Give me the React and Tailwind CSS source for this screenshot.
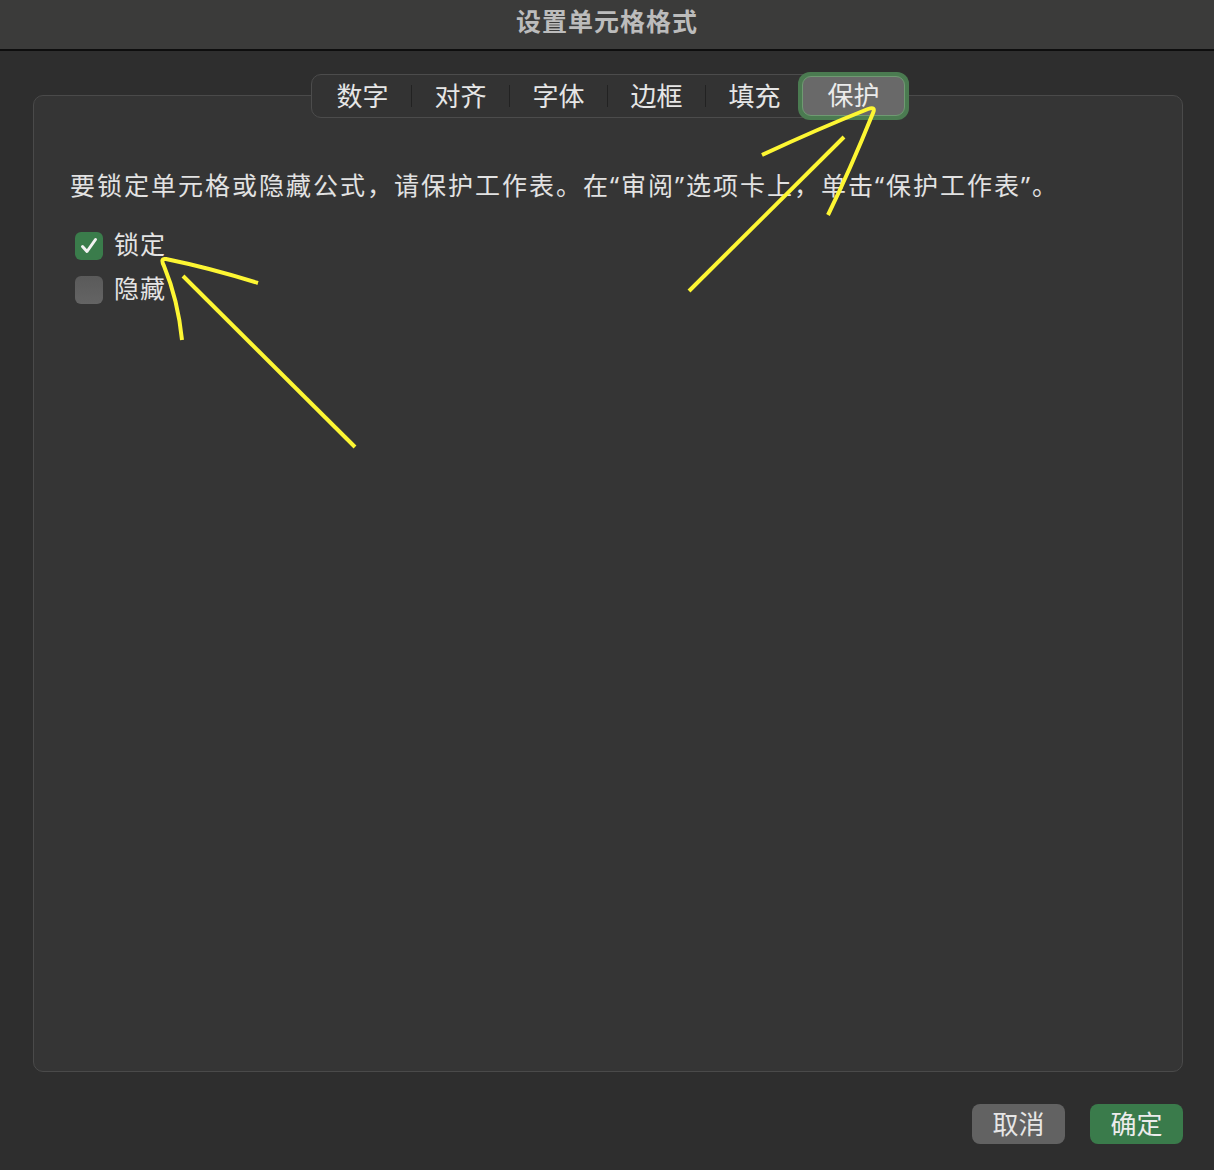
const tabs = ['数字', '对齐', '字体', '边框', '填充', '保护'];

function Checkbox({ checked, label }) {
    return (
        <div className="flex items-center gap-[11px] h-[44px]">
            {checked ? (
                <div className="w-[28px] h-[28px] rounded-[6px] bg-[#3a7c4b] flex items-center justify-center">
                    <svg width="20" height="20" viewBox="0 0 20 20">
                        <path d="M3.5 10.5 L8 15.5 L16.5 3.5" fill="none" stroke="#f2f2f2" strokeWidth="3" strokeLinecap="round" strokeLinejoin="round" />
                    </svg>
                </div>
            ) : (
                <div className="w-[28px] h-[28px] rounded-[6px] bg-gradient-to-b from-[#5a5a5a] to-[#646464]" />
            )}
            <span className="text-[25px] text-[#e4e4e4] tracking-[1px] -mt-[4px]">{label}</span>
        </div>
    );
}

const q = (c) => <span style={{ fontFamily: '"Noto Sans", sans-serif' }}>{c}</span>;

export default function App() {
    return (
        <div
            className="relative w-[1214px] h-[1170px] bg-[#2e2e2e] flex flex-col"
            style={{ fontFamily: '"Noto Sans CJK SC", "Noto Sans", sans-serif' }}
        >
            <div className="h-[51px] bg-[#3b3b3a] border-b-2 border-[#0e0e0e] flex items-center justify-center">
                <span className="text-[25px] font-bold text-[#bcbcbc] tracking-[1px] -mt-[8px]">设置单元格格式</span>
            </div>

            <div className="relative ml-[33px] mr-[31px] mt-[44px] h-[977px] rounded-[10px] border border-[#4a4a4a] bg-[#353535]">
                <div className="absolute left-[277px] -top-[22px] flex items-center">
                    <div className="flex items-center h-[44px] rounded-[10px] border border-[#4c4c4c] bg-[#333333] pl-[2px]">
                        {tabs.map((t, i) => {
                            const active = t === '保护';
                            const nextActive = tabs[i + 1] === '保护';
                            return (
                                <div key={t} className="flex items-center">
                                    {active ? (
                                        <div className="w-[111px] h-[48px] -my-[3px] -ml-[5px] -mr-[1px] rounded-[12px] bg-[#4b7b51] p-[4px]">
                                            <div className="w-full h-full rounded-[9px] border border-[#6f9a72] bg-[#696969] flex items-center justify-center">
                                                <span className="text-[26px] text-[#ebebeb] -mt-[6px]">{t}</span>
                                            </div>
                                        </div>
                                    ) : (
                                        <div className="w-[97px] h-[42px] flex items-center justify-center">
                                            <span className="text-[26px] text-[#e6e6e6] -mt-[4px]">{t}</span>
                                        </div>
                                    )}
                                    {!active && !nextActive && <div className="w-px h-[22px] bg-[#222222]" />}
                                </div>
                            );
                        })}
                    </div>
                </div>

                <div className="pl-[36px] pt-[70px]">
                    <p className="text-[25px] text-[#e2e2e2] leading-[36px] tracking-[2px]">
                        要锁定单元格或隐藏公式，请保护工作表。在{q('“')}审阅{q('”')}选项卡上，单击{q('“')}保护工作表{q('”')}。
                    </p>
                    <div className="mt-[21px] pl-[5px] flex flex-col">
                        <Checkbox checked label="锁定" />
                        <Checkbox checked={false} label="隐藏" />
                    </div>
                </div>
            </div>

            <div className="flex justify-end gap-[25px] pr-[31px] mt-[32px]">
                <button className="w-[93px] h-[40px] rounded-[8px] bg-[#626262] text-[26px] text-[#e6e6e6] flex items-center justify-center">
                    <span className="-mt-[4px]">取消</span>
                </button>
                <button className="w-[93px] h-[40px] rounded-[8px] bg-[#3a7b4b] text-[26px] text-[#ececec] flex items-center justify-center">
                    <span className="-mt-[4px]">确定</span>
                </button>
            </div>

            <svg className="absolute left-0 top-0 pointer-events-none" width="1214" height="1170">
                <g fill="none" stroke="#fdf633" strokeWidth="4" strokeLinecap="butt" strokeLinejoin="round">
                    <path d="M762 155 Q820 128 868 109 Q876 106 873 113 Q850 170 828 215" />
                    <path d="M844 137 L689 291" />
                    <path d="M258 283 Q210 268 166 259 Q160 258 164 266 Q178 300 182 340" />
                    <path d="M183 276 L355 447" />
                </g>
            </svg>
        </div>
    );
}
